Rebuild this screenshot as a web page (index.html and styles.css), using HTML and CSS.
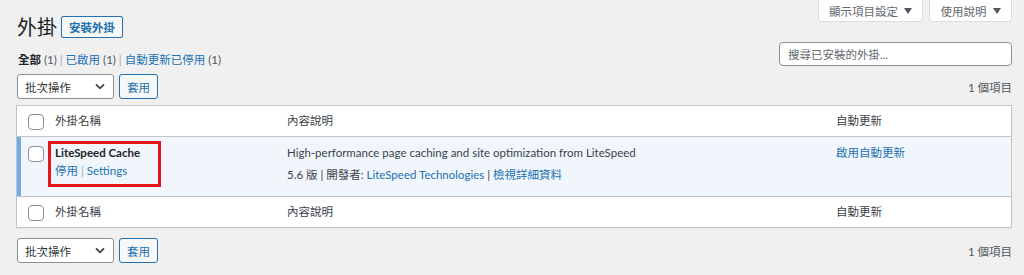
FILE: index.html
```html
<!DOCTYPE html>
<html lang="zh-Hant">
<head>
  <meta charset="UTF-8" />
  <meta name="viewport" content="width=device-width, initial-scale=1.0"/>
  <title>外掛</title>
  <link rel="stylesheet" href="styles.css">
</head>
<body>
  <div class="screen-links">
    <button class="screen-tab wide">顯示項目設定 <svg class="tri" width="8" height="6" viewBox="0 0 8 6"><path d="M0 0h8L4 6z"/></svg></button>
    <button class="screen-tab">使用說明 <svg class="tri" width="8" height="6" viewBox="0 0 8 6"><path d="M0 0h8L4 6z"/></svg></button>
  </div>

  <div class="wrap">
    <div class="title-row">
      <h1>外掛</h1>
      <a class="title-action" href="#">安裝外掛</a>
    </div>

    <div class="filter-row">
      <ul class="views">
        <li><b class="current">全部</b> <span class="count">(1)</span> <span class="sep">|</span></li>
        <li><a href="#">已啟用</a> <span class="count">(1)</span> <span class="sep">|</span></li>
        <li><a href="#">自動更新已停用</a> <span class="count">(1)</span></li>
      </ul>
      <div class="search">搜尋已安裝的外掛...</div>
    </div>

    <div class="tablenav">
      <div class="bulk">
        <div class="select">批次操作
          <svg class="chev" width="10" height="7" viewBox="0 0 10 7"><path d="M1 1.3l4 4 4-4" fill="none" stroke="#3c434a" stroke-width="1.8"/></svg>
        </div>
        <button class="btn">套用</button>
      </div>
      <span class="num">1 個項目</span>
    </div>

    <table class="plugins">
      <colgroup>
        <col class="c-check"><col class="c-name"><col class="c-desc"><col class="c-auto">
      </colgroup>
      <thead>
        <tr>
          <td class="check"><span class="box"></span></td>
          <th>外掛名稱</th>
          <th>內容說明</th>
          <th>自動更新</th>
        </tr>
      </thead>
      <tbody>
        <tr class="active">
          <td class="check"><span class="box"></span></td>
          <td class="name">
            <div class="mark">
              <strong class="line">LiteSpeed Cache</strong>
              <div class="line"><a href="#">停用</a> <span class="sep">|</span> <a href="#">Settings</a></div>
            </div>
          </td>
          <td class="desc">
            <p class="line">High-performance page caching and site optimization from LiteSpeed</p>
            <p class="line meta">5.6 版 | 開發者: <a href="#">LiteSpeed Technologies</a> | <a href="#">檢視詳細資料</a></p>
          </td>
          <td class="desc"><p class="line"><a href="#">啟用自動更新</a></p></td>
        </tr>
      </tbody>
      <tfoot>
        <tr>
          <td class="check"><span class="box"></span></td>
          <th>外掛名稱</th>
          <th>內容說明</th>
          <th>自動更新</th>
        </tr>
      </tfoot>
    </table>

    <div class="tablenav bottom">
      <div class="bulk">
        <div class="select">批次操作
          <svg class="chev" width="10" height="7" viewBox="0 0 10 7"><path d="M1 1.3l4 4 4-4" fill="none" stroke="#3c434a" stroke-width="1.8"/></svg>
        </div>
        <button class="btn">套用</button>
      </div>
      <span class="num">1 個項目</span>
    </div>
  </div>
</body>
</html>
```

FILE: styles.css
```css
body {
  margin: 0;
  background: #f0f0f1;
  font-family: Lato, "Noto Sans CJK TC", sans-serif;
  font-size: 11.5px;
  color: #3c434a;
}

a {
  color: #2271b1;
  text-decoration: none;
}

button {
  font-family: inherit;
  font-size: inherit;
}

.screen-links {
  float: right;
  display: flex;
  gap: 6px;
  margin-right: 12px;
}

.screen-tab {
  width: 83px;
  height: 22px;
  padding: 0;
  background: #fff;
  border: 1px solid #dcdcde;
  border-top: none;
  border-radius: 0 0 4px 4px;
  color: #646970;
  white-space: nowrap;
  display: flex;
  align-items: center;
  justify-content: center;
  gap: 6px;
}

.screen-tab.wide {
  width: 105px;
}

.tri {
  fill: #50575e;
}

.wrap {
  padding: 0 12px 0 16px;
}

.title-row {
  display: flex;
  align-items: center;
  gap: 4px;
  height: 22px;
  padding-top: 16px;
}

h1 {
  margin: 0 0 0 1px;
  font-size: 20px;
  font-weight: 400;
  line-height: 22px;
  color: #1d2327;
}

.title-action {
  height: 22px;
  box-sizing: border-box;
  padding: 0 7px;
  display: flex;
  align-items: center;
  border: 1px solid #2271b1;
  border-radius: 2px;
  background: #f6f7f7;
  font-weight: 600;
}

.filter-row {
  display: flex;
  justify-content: space-between;
  align-items: flex-start;
  height: 24px;
  margin-top: 4px;
}

.views {
  list-style: none;
  margin: 0;
  padding: 9px 0 0 2px;
  display: flex;
  gap: 3px;
  height: 18px;
  line-height: 18px;
}

.views .current {
  color: #1d2327;
  font-weight: 700;
}

.count {
  color: #50575e;
}

.sep {
  color: #a7aaad;
}

.search {
  width: 233px;
  height: 24px;
  box-sizing: border-box;
  padding-left: 8px;
  display: flex;
  align-items: center;
  background: #fff;
  border: 1px solid #8c8f94;
  border-radius: 4px;
  color: #646970;
}

.tablenav {
  display: flex;
  justify-content: space-between;
  align-items: center;
  height: 25px;
  margin-top: 8px;
}

.tablenav.bottom {
  margin-top: 10px;
}

.bulk {
  display: flex;
  gap: 5px;
  margin-left: 1px;
}

.select {
  width: 97px;
  height: 25px;
  box-sizing: border-box;
  padding: 0 8px 0 7px;
  display: flex;
  align-items: center;
  justify-content: space-between;
  background: #fff;
  border: 1px solid #8c8f94;
  border-radius: 3px;
  color: #2c3338;
}

.btn {
  width: 39px;
  height: 25px;
  padding: 0;
  background: #f6f7f7;
  border: 1px solid #2271b1;
  border-radius: 3px;
  color: #2271b1;
}

.num {
  color: #50575e;
}

.plugins {
  width: 996px;
  margin-top: 6px;
  table-layout: fixed;
  border-collapse: separate;
  border-spacing: 0;
  background: #fff;
  border: 1px solid #c3c4c7;
  box-shadow: 0 1px 1px rgba(0,0,0,0.04);
}

.c-check { width: 31px; }
.c-name { width: 232px; }
.c-desc { width: 549px; }
.c-auto { width: 182px; }

.plugins th,
.plugins td {
  padding: 0 7px;
  text-align: left;
  font-weight: 400;
  line-height: 18px;
}

.plugins thead th,
.plugins thead td,
.plugins tfoot th,
.plugins tfoot td {
  height: 30px;
  vertical-align: middle;
  color: #3c434a;
}

.plugins thead th,
.plugins thead td {
  border-bottom: 1px solid #c3c4c7;
}

.plugins tfoot th,
.plugins tfoot td {
  border-top: 1px solid #c3c4c7;
}

.plugins td.check {
  padding: 0 0 0 11px;
}

.box {
  display: block;
  width: 16px;
  height: 16px;
  box-sizing: border-box;
  margin-top: 2px;
  background: #fff;
  border: 1px solid #8c8f94;
  border-radius: 4px;
}

.line {
  display: block;
  height: 18px;
  margin: 0;
  white-space: nowrap;
  overflow: visible;
}

.active td {
  height: 59px;
  box-sizing: border-box;
  vertical-align: top;
  background: #f0f6fc;
  border-bottom: 0;
}

.active td.check {
  box-shadow: inset 4px 0 0 #72aee6;
  padding-top: 7px;
}

.active td.name {
  padding: 4px 0 0 0;
}

.mark {
  width: 113px;
  height: 46px;
  box-sizing: border-box;
  padding: 0 4px;
  border: 3px solid #e8141c;
}

.mark strong {
  color: #1d2327;
  font-weight: 700;
}

.active td.desc {
  padding-top: 7px;
}

.desc .meta {
  margin-top: 4px;
}
```
